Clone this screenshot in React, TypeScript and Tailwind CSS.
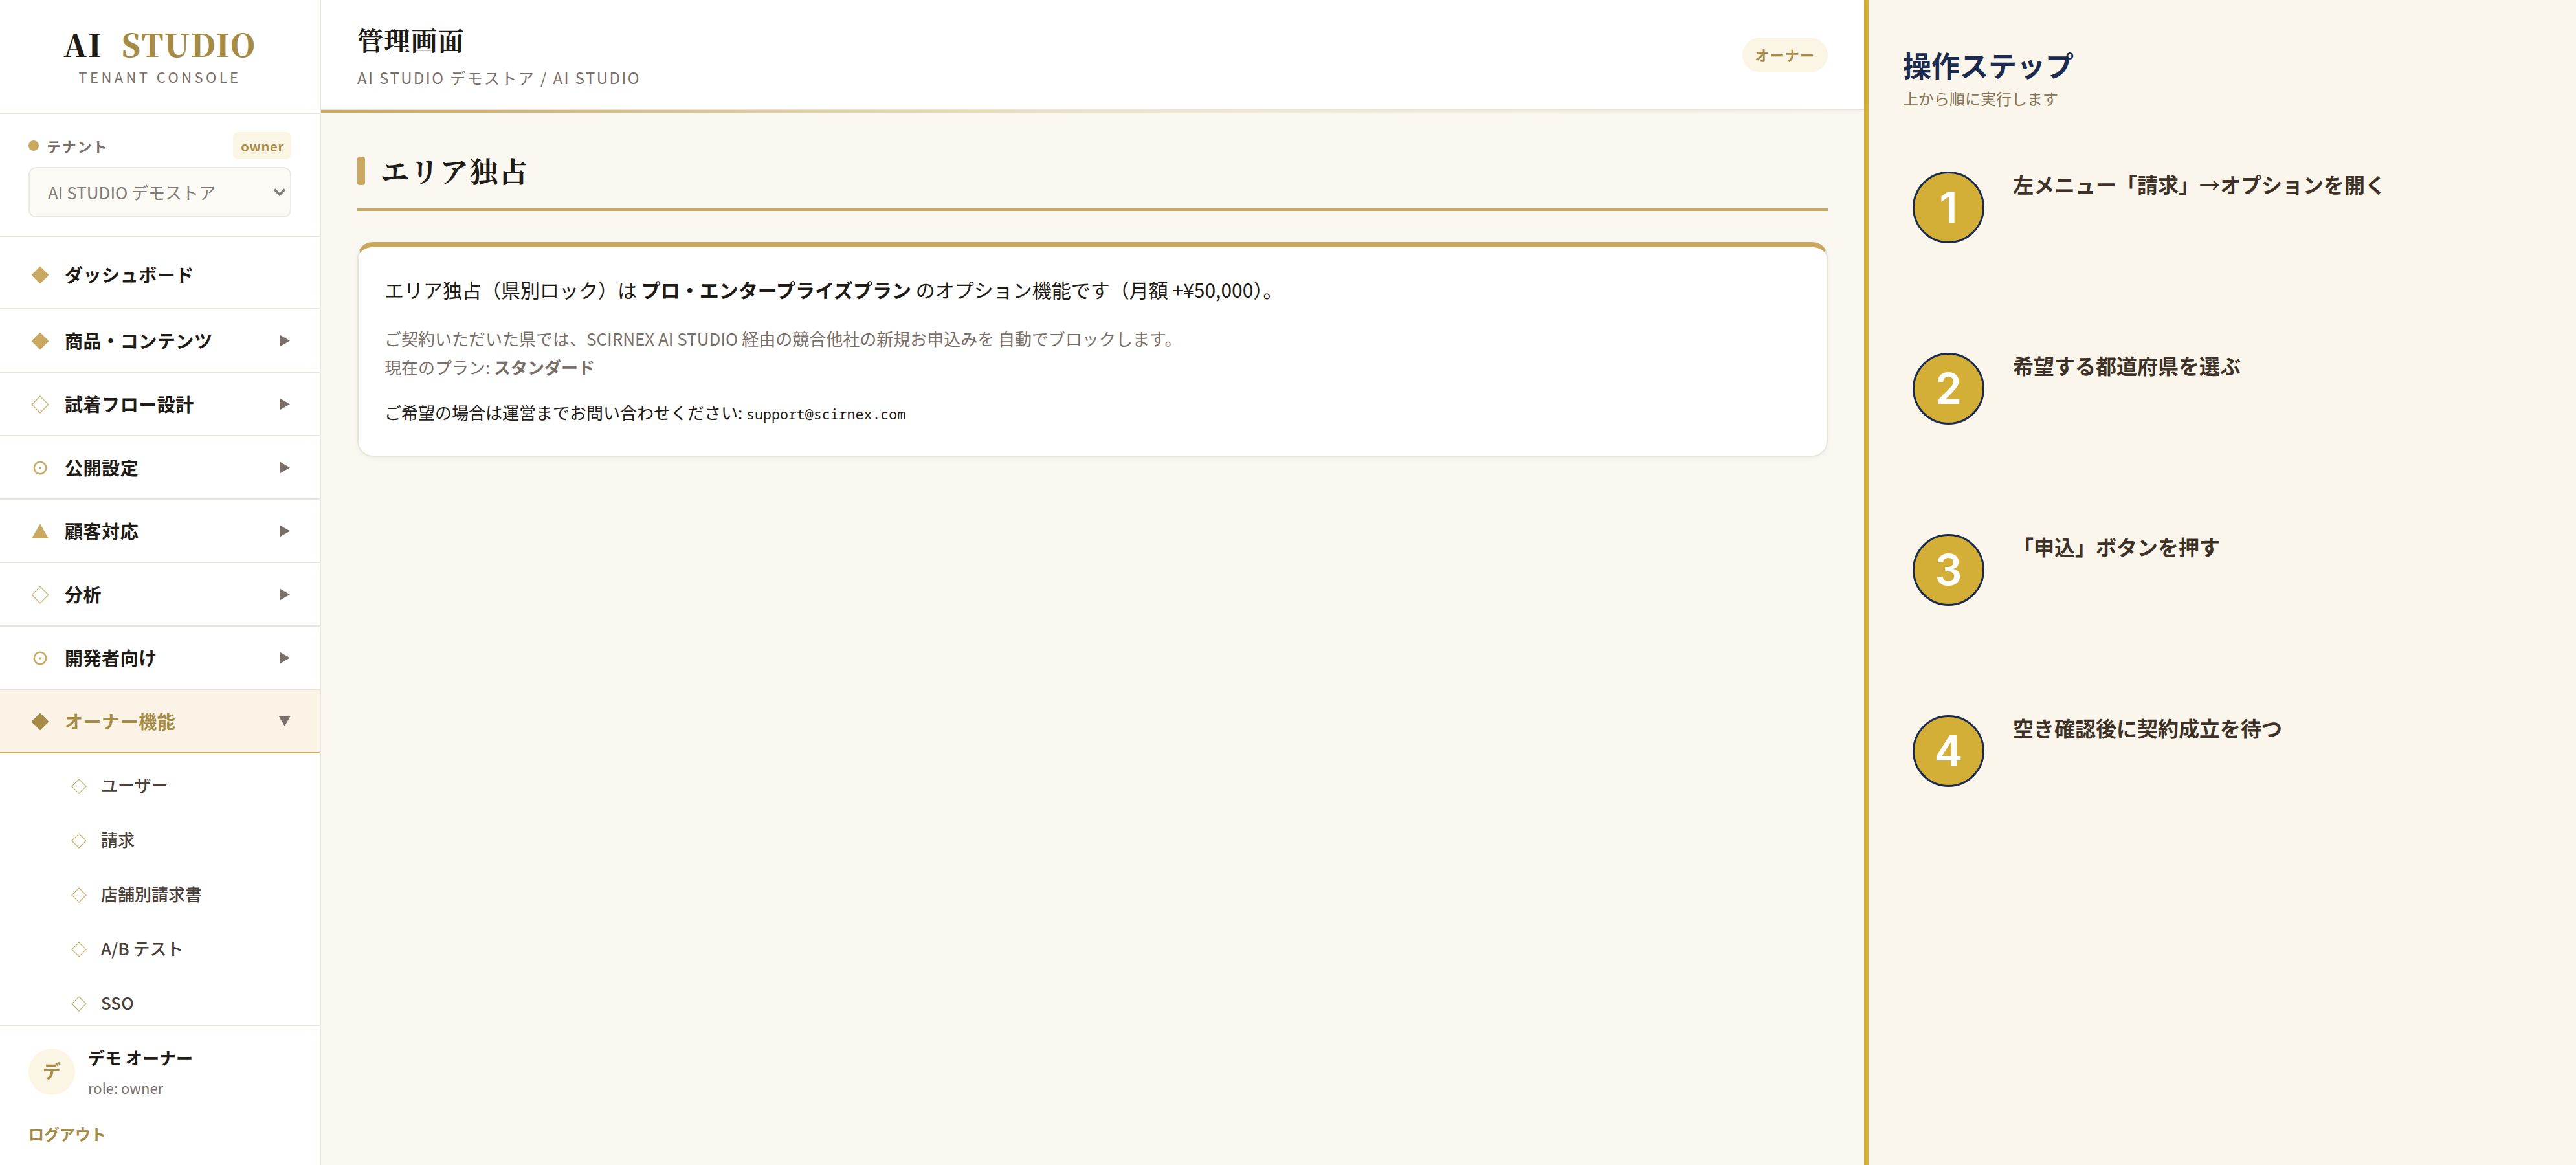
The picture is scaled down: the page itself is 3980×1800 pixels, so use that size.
type IconName = 'diamond' | 'outline' | 'target' | 'triangle'

const menuItems: { label: string; icon: IconName; active?: boolean }[] = [
  { label: '商品・コンテンツ', icon: 'diamond' },
  { label: '試着フロー設計', icon: 'outline' },
  { label: '公開設定', icon: 'target' },
  { label: '顧客対応', icon: 'triangle' },
  { label: '分析', icon: 'outline' },
  { label: '開発者向け', icon: 'target' },
  { label: 'オーナー機能', icon: 'diamond', active: true },
]

const subItems = ['ユーザー', '請求', '店舗別請求書', 'A/B テスト', 'SSO']

const steps = [
  <>
    左メニュー「請求」<span className="font-normal">→</span>オプションを開く
  </>,
  '希望する都道府県を選ぶ',
  '「申込」ボタンを押す',
  '空き確認後に契約成立を待つ',
]

function MenuIcon({ name }: { name: IconName }) {
  return (
    <svg viewBox="0 0 28 28" className="w-7 h-7 mt-[2px] shrink-0" fill="none">
      {name === 'diamond' && <path d="M14 0.5 27.5 14 14 27.5 0.5 14Z" fill="currentColor" />}
      {name === 'outline' && <path d="M14 1.2 26.8 14 14 26.8 1.2 14Z" stroke="currentColor" strokeWidth="1.2" />}
      {name === 'target' && (
        <>
          <circle cx="14" cy="14" r="9.2" stroke="currentColor" strokeWidth="2.5" />
          <circle cx="14" cy="14" r="1.8" fill="currentColor" />
        </>
      )}
      {name === 'triangle' && <path d="M14 2.2 27 25H1Z" fill="currentColor" />}
    </svg>
  )
}

function Sidebar() {
  return (
    <aside className="w-[496px] shrink-0 h-full flex flex-col bg-white border-r-2 border-[#e8e4dd]">
      <div className="h-[176px] shrink-0 border-b-2 border-[#e8e4dd] flex flex-col items-center pt-10">
        <div className="font-[Noto_Serif_CJK_JP,Noto_Serif_JP,Liberation_Serif,serif] font-black text-[48px] leading-[56px] tracking-[1.92px] text-[#1f1b16] whitespace-pre">
          AI <span className="ml-[15px] text-[#a68b47]">STUDIO</span>
        </div>
        <div className="text-[22px] leading-[36px] tracking-[4.4px] text-[#7a6f68] mt-1">TENANT CONSOLE</div>
      </div>

      {/* Tenant picker */}
      <div className="h-[190px] shrink-0 border-b-2 border-[#e8e4dd] px-11 pt-[28px]">
        <div className="flex items-center h-[42px]">
          <span className="w-4 h-4 rounded-full bg-[#c9a961]" />
          <span className="ml-3 text-[22px] leading-[42px] font-bold tracking-[1.76px] text-[#7a6f68]">テナント</span>
          <span className="ml-auto h-[42px] rounded-lg bg-[#fbf5e6] pl-3 pr-[11px] text-[20px] leading-[44px] font-bold tracking-[0.8px] text-[#a68b47]">
            owner
          </span>
        </div>
        <div className="mt-3 h-[78px] rounded-xl border-2 border-[#edeae5] bg-[#fcfaf5] flex items-center pl-7 pr-[6px] text-[26px] text-[#827c77]">
          <span className="mb-[2px]">AI STUDIO デモストア</span>
          <svg viewBox="0 0 20 16" className="ml-auto w-5 h-4" fill="none">
            <path d="M2 3.5 10 11.5 18 3.5" stroke="currentColor" strokeWidth="3.8" />
          </svg>
        </div>
      </div>

      <nav className="flex-1 min-h-0 overflow-hidden pt-[10px]">
        <div className="h-[102px] border-b-2 border-[#e8e4dd] flex items-center pl-12 pb-1 text-[#c9a961]">
          <MenuIcon name="diamond" />
          <span className="ml-6 text-[28px] font-bold tracking-[0.56px] text-[#1f1b16]">ダッシュボード</span>
        </div>
        {menuItems.map((item) => (
          <div
            key={item.label}
            className={`h-[98px] border-b-2 flex items-center pl-12 pr-[44px] ${
              item.active ? 'bg-[#fbf4e6] border-[#c9a961] text-[#a68b47]' : 'border-[#e8e4dd] text-[#c9a961]'
            }`}
          >
            <MenuIcon name={item.icon} />
            <span
              className={`ml-6 text-[28px] font-bold tracking-[0.56px] ${
                item.active ? 'text-[#a68b47]' : 'text-[#1f1b16]'
              }`}
            >
              {item.label}
            </span>
            <svg viewBox="0 0 20 20" className="ml-auto w-5 h-5 text-[#7a6f68]" fill="currentColor">
              {item.active ? <path d="M0.5 2H19L9.7 18Z" /> : <path d="M2 1.3 17.9 10.5 2 19.7Z" />}
            </svg>
          </div>
        ))}
        <div className="pt-2">
          {subItems.map((label) => (
            <div key={label} className="h-[84px] flex items-center pl-[110px] text-[#c9a961]">
              <svg viewBox="0 0 24 24" className="w-6 h-6 mt-px shrink-0" fill="none">
                <path d="M12 1 23 12 12 23 1 12Z" stroke="currentColor" strokeWidth="1.1" />
              </svg>
              <span className="ml-[22px] mb-[3px] text-[26px] font-medium text-[#4a403a]">{label}</span>
            </div>
          ))}
        </div>
      </nav>

      <div className="h-[216px] shrink-0 border-t-2 border-[#e8e4dd] px-11 pt-[34px]">
        <div className="flex gap-5 h-[72px]">
          <div className="w-[72px] h-[72px] rounded-full bg-[#fbf5e6] text-[#a68b47] text-[28px] leading-[68px] font-bold text-center">
            デ
          </div>
          <div className="-mt-2">
            <div className="text-[26px] leading-[44px] font-bold text-[#1f1b16]">デモ オーナー</div>
            <div className="mt-[2px] text-[22px] leading-[44px] text-[#7a6f68]">role: owner</div>
          </div>
        </div>
        <div className="mt-[38px] text-[24px] leading-[43px] font-bold text-[#a68b47]">ログアウト</div>
      </div>
    </aside>
  )
}

function Main() {
  return (
    <main className="w-[2384px] shrink-0 h-full bg-[#fbf8f1]">
      <header className="relative h-[170px] bg-white border-b-2 border-[#e8e4dd] px-14 flex items-start justify-between shadow-[0_2px_8px_rgba(31,27,22,0.04)]">
        <div className="pt-[33px]">
          <h1 className="font-[Noto_Serif_CJK_JP,Noto_Serif_JP,Liberation_Serif,serif] font-bold text-[40px] leading-[56px] tracking-[1.6px] text-[#1f1b16]">
            管理画面
          </h1>
          <p className="text-[24px] leading-[40px] mt-[11px] tracking-[2.4px] text-[#7a6f68]">
            AI STUDIO デモストア / AI STUDIO
          </p>
        </div>
        <span className="mt-[58px] h-[54px] rounded-[27px] bg-[#fbf5e6] px-5 text-[22px] leading-[53px] font-bold tracking-[1.1px] text-[#a68b47]">
          オーナー
        </span>
        <div className="absolute left-0 right-0 top-[170px] h-1 bg-linear-to-r from-[#c9a961] via-[#f0e5c8] to-transparent" />
      </header>

      <div className="px-14 pt-[60px]">
        <div className="h-[96px] border-b-4 border-[#c9a961] flex items-start gap-6 pt-[3px]">
          <span className="w-3 h-11 mt-[9px] rounded bg-[#c9a961]" />
          <h2 className="font-[Noto_Serif_CJK_JP,Noto_Serif_JP,Liberation_Serif,serif] font-bold text-[44px] leading-[60px] tracking-[1.76px] text-[#1f1b16]">
            エリア独占
          </h2>
        </div>

        <section className="mt-12 h-[332px] rounded-3xl bg-white border-2 border-t-8 border-[#e8e4dd] border-t-[#c9a961] px-10 pt-[39px] shadow-[0_2px_8px_rgba(31,27,22,0.04)]">
          <p className="text-[30px] leading-[52px] text-[#1f1b16]">
            エリア独占（県別ロック）は <b>プロ・エンタープライズプラン</b> のオプション機能です（月額 +¥50,000）。
          </p>
          <p className="mt-7 text-[26px] leading-[44px] text-[#7a6f68]">
            ご契約いただいた県では、SCIRNEX AI STUDIO 経由の競合他社の新規お申込みを 自動でブロックします。
            <br />
            現在のプラン: <b>スタンダード</b>
          </p>
          <p className="mt-[26px] text-[26px] leading-[44px] text-[#1f1b16]">
            ご希望の場合は運営までお問い合わせください:{' '}
            <code className="font-[Noto_Sans_Mono,DejaVu_Sans_Mono,monospace] text-[21.6px]">support@scirnex.com</code>
          </p>
        </section>
      </div>
    </main>
  )
}

function StepsPanel() {
  return (
    <aside className="flex-1 h-full bg-[#faf6eb] border-l-[7px] border-[#d4af37] pl-[53px] pt-[68px]">
      <h2 className="text-[44px] leading-[64px] font-bold text-[#1b2a4e]">操作ステップ</h2>
      <p className="text-[24px] leading-[40px] text-[#857355]">上から順に実行します</p>
      <ol className="mt-[93px]">
        {steps.map((step, i) => (
          <li key={i} className="h-[280px] flex items-start pl-[15px]">
            <span className="w-[111px] h-[111px] rounded-full border-[3px] border-[#1b2a4e] bg-[#d4af37] text-white font-[Inter,sans-serif] font-semibold text-[66px] flex items-center justify-center">
              {i + 1}
            </span>
            <span className="ml-11 text-[32px] leading-[38px] font-bold text-[#3e3228]">{step}</span>
          </li>
        ))}
      </ol>
    </aside>
  )
}

export default function App() {
  return (
    <div className="w-[3980px] h-[1800px] flex overflow-hidden font-[Noto_Sans_CJK_JP,sans-serif]">
      <Sidebar />
      <Main />
      <StepsPanel />
    </div>
  )
}
